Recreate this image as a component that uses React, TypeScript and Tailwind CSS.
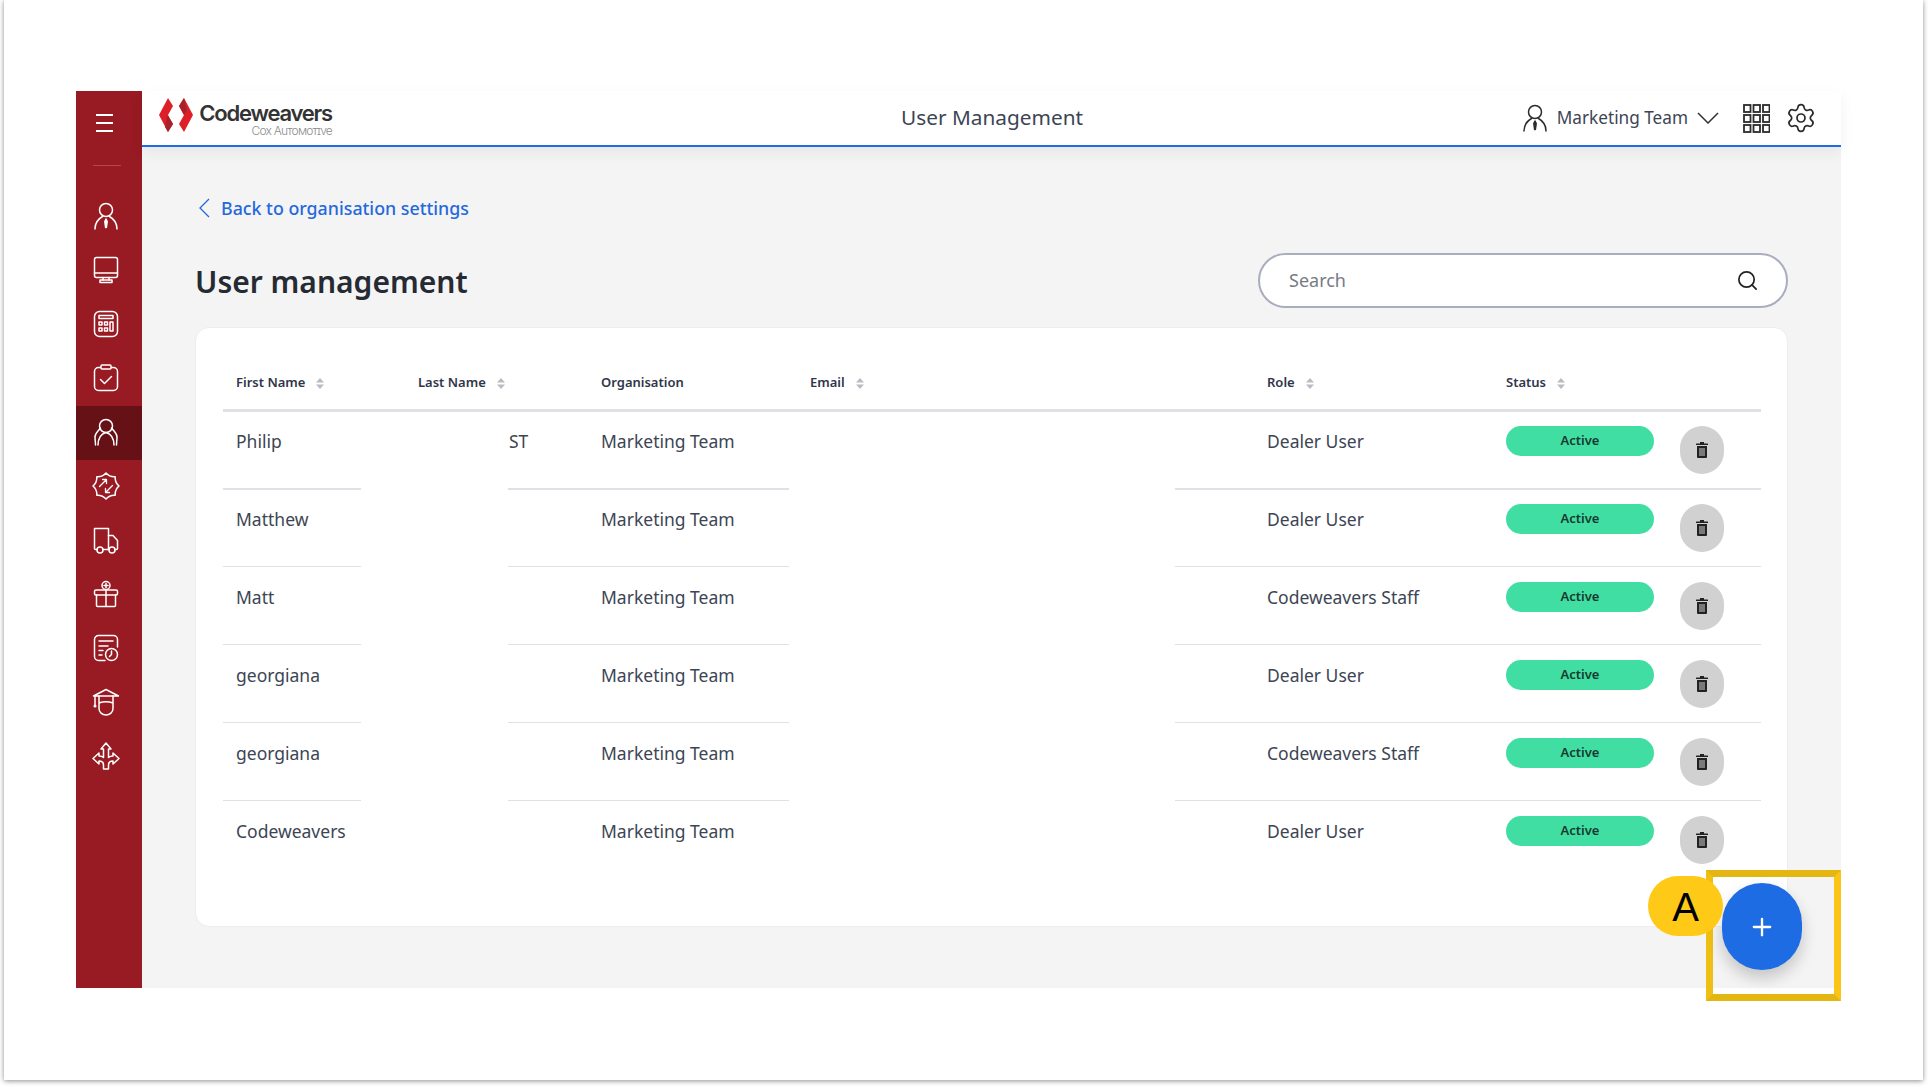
import React from 'react'
import { Settings, Search, Plus } from 'lucide-react'

const users = [
  { first: 'Philip', last: 'ST', role: 'Dealer User' },
  { first: 'Matthew', last: '', role: 'Dealer User' },
  { first: 'Matt', last: '', role: 'Codeweavers Staff' },
  { first: 'georgiana', last: '', role: 'Dealer User' },
  { first: 'georgiana', last: '', role: 'Codeweavers Staff' },
  { first: 'Codeweavers', last: '', role: 'Dealer User' }
]

const columns = [
  { label: 'First Name', sort: true },
  { label: 'Last Name', sort: true },
  { label: 'Organisation', sort: false },
  { label: 'Email', sort: true },
  { label: 'Role', sort: true },
  { label: 'Status', sort: true }
]

const Svg = ({ children, className = 'w-7 h-7' }: { children: React.ReactNode; className?: string }) => (
  <svg viewBox="0 0 28 28" fill="none" stroke="currentColor" strokeWidth="1.5" strokeLinecap="round" strokeLinejoin="round" className={className}>
    {children}
  </svg>
)

const PersonIcon = ({ className }: { className?: string }) => (
  <Svg className={className}>
    <circle cx="14" cy="8" r="6.5" />
    <path d="M3 27c0-6 3-10 7.5-12.5M25 27c0-6-3-10-7.5-12.5" />
    <path d="M14 17l1.2 2.5-.8 6h-.8l-.8-6z" fill="currentColor" />
  </Svg>
)

// wavy badge outline, 8 lobes
const badgePath = () => {
  let d = ''
  for (let i = 0; i < 8; i++) {
    const a = (i * Math.PI) / 4 - Math.PI / 2
    const b = a + Math.PI / 8
    const c = a + Math.PI / 4
    const p = (r: number, t: number) => `${(14 + r * Math.cos(t)).toFixed(1)} ${(14 + r * Math.sin(t)).toFixed(1)}`
    if (i === 0) d += `M${p(13, a)}`
    d += `Q${p(9.5, b)} ${p(13, c)}`
  }
  return d + 'Z'
}

const sideIcons = [
  <PersonIcon />,
  <Svg>
    <rect x="2.5" y="1.5" width="23" height="20" rx="2" />
    <path d="M2.5 17h23M11 21.5v2.5M17 21.5v2.5" />
    <rect x="8" y="24" width="12" height="2.5" />
  </Svg>,
  <Svg>
    <rect x="2.5" y="1.5" width="23" height="25" rx="5" />
    <rect x="7" y="5.5" width="14" height="3" />
    <rect x="7" y="12" width="3" height="3" />
    <rect x="12.5" y="12" width="3" height="3" />
    <rect x="7" y="18" width="3" height="3" />
    <rect x="12.5" y="18" width="3" height="3" />
    <rect x="18" y="12" width="3" height="9" />
  </Svg>,
  <Svg>
    <rect x="2.5" y="3.5" width="23" height="23" rx="4" />
    <rect x="9" y="1" width="10" height="4" rx="1" fill="#981a22" />
    <path d="M8.5 15.5l4 4 7-7" />
  </Svg>,
  <Svg>
    <circle cx="14" cy="8" r="6.5" />
    <path d="M6 27c0-7 3-11 8-12.5 5 1.500 8 5.500 8 12.500" />
    <path d="M8.500 10c-2 3-5.500 5-5.500 9 0 3 .5 5 .5 8M19.500 10c2 3 5.500 5 5.500 9 0 3-.5 5-.5 8" />
  </Svg>,
  <Svg>
    <path d={badgePath()} />
    <g strokeWidth="1.3">
      <path d="M7.500 14.500L14.500 7.500M10.500 7.500h4v4M20.500 13.500L13.500 20.500M13.500 16.500v4h4" />
    </g>
  </Svg>,
  <Svg>
    <path d="M5 23.500H3.500a1 1 0 0 1-1-1V2.500h14v21H11" />
    <path d="M16.500 9.500H21l4.500 5v8a1 1 0 0 1-1 1H23M16.500 23.500H17" />
    <circle cx="8" cy="24" r="3" />
    <circle cx="20" cy="24" r="3" />
  </Svg>,
  <Svg>
    <circle cx="14" cy="5.500" r="4" />
    <path d="M14 3.500v4M12 5.500h4" />
    <rect x="2.500" y="10" width="23" height="5" rx="1.500" />
    <path d="M4.500 15v10.500a1 1 0 0 0 1 1h17a1 1 0 0 0 1-1V15M14 10v16.500" />
  </Svg>,
  <Svg>
    <path d="M13 26.500H6.500a4 4 0 0 1-4-4v-17a4 4 0 0 1 4-4h15a4 4 0 0 1 4 4V13" />
    <path d="M7 7h14M7 12h9M7 16.500h4M7 21h3" />
    <circle cx="19.500" cy="20.500" r="6" />
    <path d="M19.500 17v3.500l-2 2" />
  </Svg>,
  <Svg>
    <path d="M14 1.500L26.500 8H1.500zM3 8v9" />
    <circle cx="3" cy="18" r=".8" fill="currentColor" />
    <path d="M7 8v12.500a7 6.500 0 0 0 14 0V8M7 15c4-1.500 10-1.500 14 0" />
  </Svg>,
  <Svg>
    <path d="M14 1L19 7H16.500V15.500Q18 14 21 14V11L27 16.500L21 22V19Q16.500 19 16.500 23V27H11.500V23Q11.500 19 7 19V22L1 16.500L7 11V14Q10 14 11.500 15.500V7H9Z" />
  </Svg>
]

const SortArrows = () => (
  <svg viewBox="0 0 8 11" className="w-2 h-[11px] text-[#b9bcc4]" fill="currentColor">
    <path d="M4 0l4 4.500H0zM4 11L0 6.500h8z" />
  </svg>
)

const TrashIcon = () => (
  <svg viewBox="0 0 12 16" className="w-3 h-4">
    <path d="M4 0h4v1.500h3.500a.5.5 0 0 1 .5.500v1H0V2a.5.5 0 0 1 .5-.5H4z" fill="#222" />
    <path d="M1 4h10v11a1 1 0 0 1-1 1H2a1 1 0 0 1-1-1z" fill="#222" />
    <path d="M4 6v8M6 6v8M8 6v8" stroke="#d1d1d1" strokeWidth="1" />
  </svg>
)

const App: React.FC = () => {
  return (
    <div className="w-[1928px] h-[1088px] bg-white font-['Noto_Sans',sans-serif] overflow-hidden">
      <div className="ml-[4px] w-[1919px] h-[1080px] bg-white shadow-[0_1px_5px_rgba(0,0,0,0.45)] pt-[91px] pl-[72px]">
        <div className="relative w-[1765px] h-[897px] flex">
          {/* Sidebar */}
          <aside className="w-[66px] shrink-0 bg-[#981a22] flex flex-col text-white">
            <div className="h-[74px] pl-[20px] pt-[23px]">
              <div className="w-[17px] flex flex-col gap-[6px]">
                <div className="h-[2px] bg-white" />
                <div className="h-[2px] bg-white" />
                <div className="h-[2px] bg-white" />
              </div>
            </div>
            <div className="mx-[17px] w-[28px] h-px bg-[#b3474e]" />
            <div className="mt-[24px] flex flex-col">
              {sideIcons.map((icon, i) => (
                <div key={i} className={`h-[54px] pl-[16px] pb-[2px] flex items-center ${i === 4 ? 'bg-[#661116]' : ''}`}>
                  {icon}
                </div>
              ))}
            </div>
          </aside>

          <div className="flex-1 flex flex-col bg-[#f4f4f4]">
            {/* Top bar */}
            <header className="relative h-[56px] shrink-0 bg-white border-b-2 border-[#1d6ce4] shadow-[0_6px_14px_rgba(0,0,0,0.06)] flex items-center pl-[17px] pr-[24px]">
              <svg viewBox="0 0 34 34" className="w-[34px] h-[34px] shrink-0 -mt-[6px]">
                <path d="M9 0l5 8-5 9 5 9-5 8L0 17z" fill="#dd2027" />
                <path d="M8.500 17l5.500 9-5 8-3-5z" fill="#a8222b" />
                <path d="M25 0l9 17-9 17-5-8 5-9-5-9z" fill="#dd2027" />
                <path d="M25 0l-5 8 5 9 3-5z" fill="#a8222b" />
              </svg>
              <div className="ml-[8px] flex flex-col items-end w-[131px] font-['Inter',sans-serif]">
                <span className="text-[22px] leading-[24px] font-semibold tracking-[-1.2px] text-[#333]">Codeweavers</span>
                <span className="text-[12px] leading-[11px] tracking-[-0.8px] font-light text-[#8c8c8c] [font-variant-caps:small-caps]">Cox Automotive</span>
              </div>
              <h1 className="ml-[569px] -mt-[2px] text-[20.8px] text-[#3d4554] leading-[28px] w-[181px] whitespace-nowrap">User Management</h1>
              <div className="ml-auto flex items-center text-[#333]">
                <PersonIcon className="w-[28px] h-[30px] text-[#2b2b2b]" />
                <span className="ml-[8px] text-[17.2px] leading-[24px] text-[#3d4554] whitespace-nowrap">Marketing Team</span>
                <svg viewBox="0 0 22 12" className="ml-[9px] w-[22px] h-[12px]" fill="none" stroke="#333" strokeWidth="1.500">
                  <path d="M1 1l10 10L21 1" />
                </svg>
                <svg viewBox="0 0 27 29" className="ml-[24px] w-[27px] h-[29px]" fill="none" stroke="#2b2b2b" strokeWidth="1.800">
                  {[1, 10.500, 20].map((x) =>
                    [1, 11, 21].map((y) => <rect key={`${x}-${y}`} x={x} y={y} width="6.500" height="7" />)
                  )}
                </svg>
                <Settings className="ml-[15px] w-[32px] h-[32px] text-[#2b2b2b]" strokeWidth={1.300} />
              </div>
            </header>

            {/* Content */}
            <main className="flex-1 px-[53px] pt-[49px] min-h-0">
              <a className="flex items-center text-[17.8px] leading-[24px] font-medium text-[#2468dd]">
                <svg viewBox="0 0 11 20" className="ml-[4px] w-[11px] h-[20px]" fill="none" stroke="#2468dd" strokeWidth="1.300">
                  <path d="M10 1L1 10l9 9" />
                </svg>
                <span className="ml-[11px]">Back to organisation settings</span>
              </a>

              <div className="mt-[33px] h-[54px] flex items-center justify-between">
                <h2 className="mt-[4px] text-[30px] leading-[40px] font-semibold text-[#252a33]">User management</h2>
                <div className="w-[530px] h-[55px] rounded-full bg-white border-2 border-[#a9adbd] flex items-center pl-[29px] pr-[27px]">
                  <span className="flex-1 text-[18px] text-[#777b85]">Search</span>
                  <Search className="w-[23px] h-[23px] text-[#222]" strokeWidth={1.800} />
                </div>
              </div>

              {/* Table card */}
              <section className="mt-[20px] h-[600px] rounded-[14px] bg-white border border-[#ececf2] pl-[27px] pr-[26px]">
                <div className="h-[84px] pt-[45px] pl-[13px] border-b-[3px] border-[#dfe1e6] grid grid-cols-[182px_183px_209px_457px_239px_1fr]">
                  {columns.map((c) => (
                    <div key={c.label} className="flex items-center h-[20px] gap-[11px] text-[13px] font-semibold text-[#30354a]">
                      <span>{c.label}</span>
                      {c.sort && <SortArrows />}
                    </div>
                  ))}
                </div>

                {users.map((u, i) => {
                  const line = i === 0 ? 'border-b-2 border-[#dfe1e6]' : i < 5 ? 'border-b border-[#dfe1e6]' : ''
                  const textTop = i < 2 ? 'pt-[17px]' : 'pt-[18px]'
                  const boxTop = i < 2 ? 'mt-[14px]' : 'mt-[15px]'
                  return (
                    <div key={i} className={`grid grid-cols-[138px_147px_93px_188px_386px_1fr] text-[17.5px] leading-[24px] text-[#3d4554] ${i === 1 ? 'h-[77px]' : 'h-[78px]'}`}>
                      <div className={`pl-[13px] ${textTop} ${line}`}>{u.first}</div>
                      <div />
                      <div className={`pl-[1px] ${textTop} ${line}`}>{u.last}</div>
                      <div className={`${textTop} ${line}`}>Marketing Team</div>
                      <div />
                      <div className={`flex items-start pl-[92px] ${line}`}>
                        <span className={`${textTop} w-[239px]`}>{u.role}</span>
                        <span className={`${boxTop} w-[148px] h-[30px] rounded-full bg-[#40dea3] flex items-center justify-center text-[13px] font-semibold text-[#17392d] pb-[2px]`}>Active</span>
                        <span className={`ml-[26px] ${boxTop} w-[44px] h-[48px] rounded-full bg-[#d1d1d1] flex items-center justify-center`}>
                          <TrashIcon />
                        </span>
                      </div>
                    </div>
                  )
                })}
              </section>
            </main>
          </div>

          {/* Annotation over the page */}
          <div className="absolute left-[1630px] top-[779px] w-[135px] h-[131px] border-[7px] border-t-[#e3b612] border-b-[#e3b612] border-l-[#f0bf14] border-r-[#fbc417]" />
          <div className="absolute left-[1646px] top-[792px] w-[80px] h-[87px] rounded-full bg-[#1d6ce4] flex items-center justify-center shadow-[0_8px_16px_rgba(0,0,0,0.2)] text-white">
            <Plus className="w-[28px] h-[28px]" strokeWidth={2} />
          </div>
          <div className="absolute left-[1572px] top-[785px] w-[75px] h-[60px] rounded-full bg-[#ffc917] flex items-center justify-center pt-[2px] text-[40px] font-['Liberation_Sans',sans-serif] text-black">A</div>
        </div>
      </div>
    </div>
  )
}

export default App
